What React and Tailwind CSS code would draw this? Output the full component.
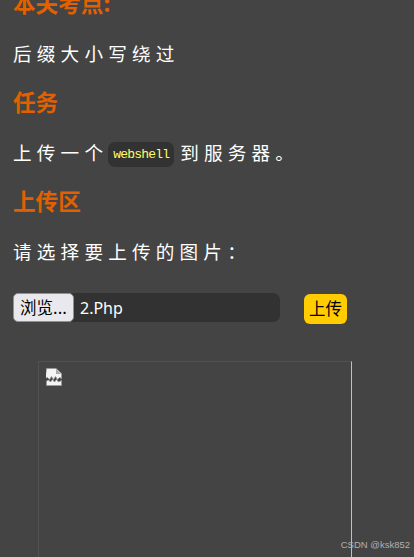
function Heading({ children }) {
  return (
    <h3 className="h-[30px] text-[22.6px] leading-[30px] font-bold text-[#e26000] whitespace-nowrap">
      {children}
    </h3>
  );
}

function Paragraph({ children }) {
  return (
    <p className="my-[5px] flex h-[59px] items-center text-[18.6px] leading-[30px] tracking-[5.2px] whitespace-nowrap text-white">
      {children}
    </p>
  );
}

function BrokenImage() {
  return (
    <svg className="h-[18px] w-4" viewBox="0 0 16 18">
      <path d="M.5.5h9.500l5.500 5v5l-2-1-2 2-2-3-2 3-2-3-2 3-2-2-2.500 1z" fill="#f4f4f4" stroke="#999" strokeWidth=".9" />
      <path d="M10 1v5h5z" fill="#aaa" />
      <path d="M.5 13l2-1 2 2 2-2.500 2 2.500 2-2.500 2 2.500 3-1.500v5H.5z" fill="#f4f4f4" stroke="#999" strokeWidth=".8" />
    </svg>
  );
}

export default function App() {
  return (
    <main className="relative h-[557px] w-[414px] overflow-hidden bg-[#444] pl-[13px] font-['Noto_Sans_CJK_SC',sans-serif] font-normal">
      <div className="-mt-[12px] flex flex-col">
        <Heading>本关考点:</Heading>
        <Paragraph>后缀大小写绕过</Paragraph>
        <Heading>任务</Heading>
        <Paragraph>
          上传一个
          <code className="mt-[6px] mr-[6px] flex h-[25px] w-[66px] items-center justify-center rounded-[7px] bg-[#323232] font-['Liberation_Mono',monospace] text-[13px] tracking-[-0.8px] text-[#ffff66]">
            webshell
          </code>
          到服务器。
        </Paragraph>
        <Heading>上传区</Heading>
        <Paragraph>请选择要上传的图片：</Paragraph>
      </div>
      <form className="mt-[8px] flex items-start">
        <div className="flex h-[29px] w-[267px] items-center rounded-[7px] bg-[#323232] text-[16.5px] text-white">
          <span className="flex h-[29px] w-[61px] items-center justify-center rounded-[5px] border border-[#8f8f9d] bg-[#e9e9ed] text-black">
            浏览...
          </span>
          <span className="ml-[6px] font-['Noto_Sans',sans-serif] text-[16px]">2.Php</span>
        </div>
        <button type="button" className="mt-px ml-6 flex h-[30px] w-[43px] items-center justify-center rounded-md bg-[#ffcc00] pb-px text-[16.5px] text-black">
          上传
        </button>
      </form>
      <div className="mt-[37px] ml-[25px] h-[210px] w-[314px] border-t border-r border-l border-t-[#525252] border-r-[#c0c0c0] border-l-[#525252] pt-[6px] pl-[7px]">
        <BrokenImage />
      </div>
      <span className="absolute right-[4px] bottom-[5px] font-['Liberation_Sans',sans-serif] text-[9.5px] leading-[14px] text-[#b0b0b0]">
        CSDN @ksk852
      </span>
    </main>
  );
}
